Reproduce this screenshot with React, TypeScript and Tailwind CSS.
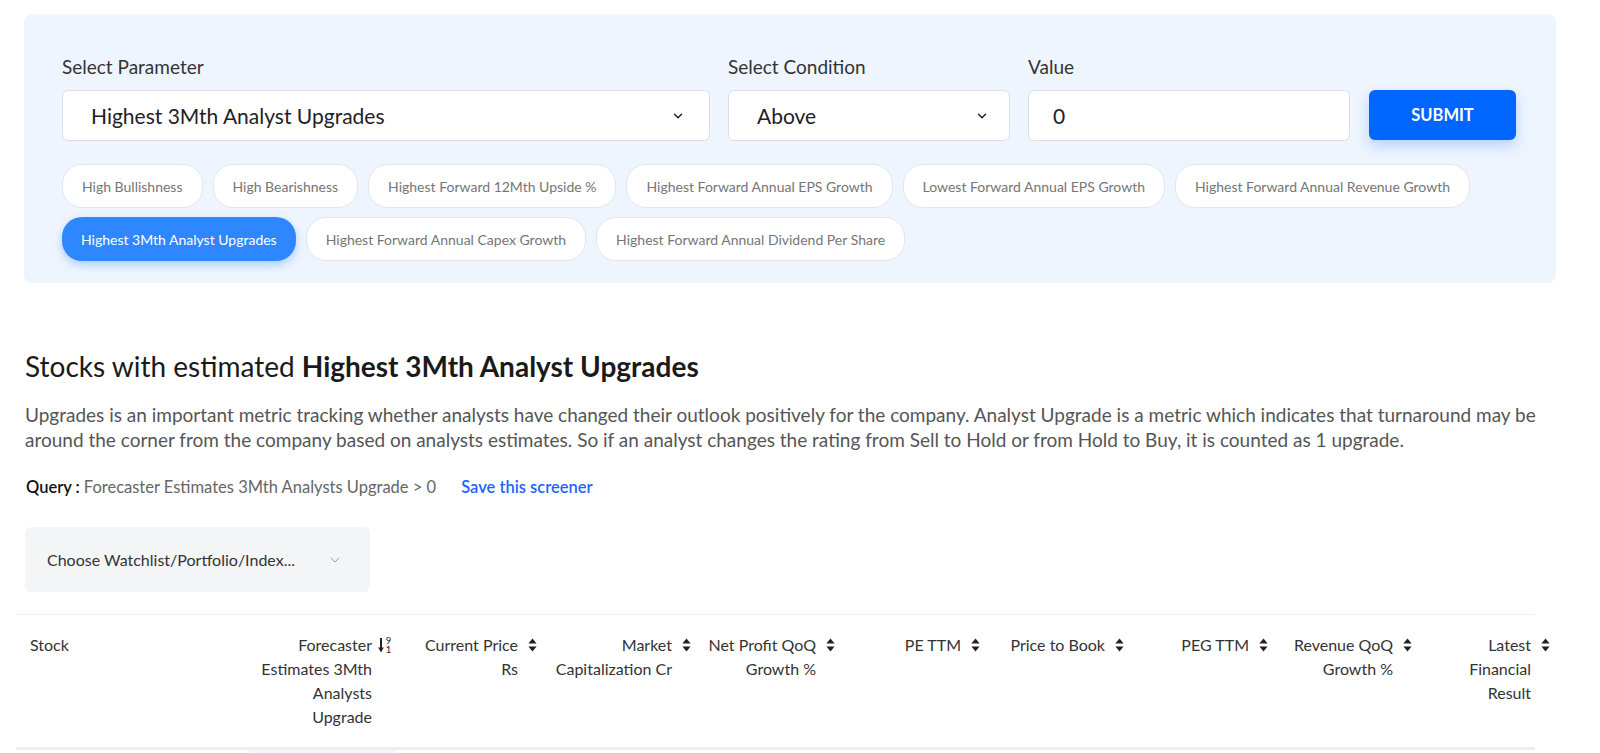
import { ChevronDown } from "lucide-react";

const CHIPS_ROW_1 = [
  "High Bullishness",
  "High Bearishness",
  "Highest Forward 12Mth Upside %",
  "Highest Forward Annual EPS Growth",
  "Lowest Forward Annual EPS Growth",
  "Highest Forward Annual Revenue Growth",
];

const CHIPS_ROW_2 = [
  "Highest 3Mth Analyst Upgrades",
  "Highest Forward Annual Capex Growth",
  "Highest Forward Annual Dividend Per Share",
];

const ACTIVE = "Highest 3Mth Analyst Upgrades";

const COLUMNS = [
  { label: "Current Price Rs", cell: "w-[145px]", text: "w-[100px]" },
  { label: "Market Capitalization Cr", cell: "w-[154px]", text: "w-[124px]" },
  { label: "Net Profit QoQ Growth %", cell: "w-[144px]", text: "w-[114px]" },
  { label: "PE TTM", cell: "w-[145px]", text: "w-[110px]" },
  { label: "Price to Book", cell: "w-[144px]", text: "w-[110px]" },
  { label: "PEG TTM", cell: "w-[144px]", text: "w-[110px]" },
  { label: "Revenue QoQ Growth %", cell: "w-[144px]", text: "w-[100px]" },
  { label: "Latest Financial Result", cell: "w-[138px]", text: "w-[70px]" },
];

function SortIcon() {
  return (
    <svg width="9" height="14" viewBox="0 0 9 14" className="mt-[5px] shrink-0 text-[#222]" fill="currentColor">
      <path d="M4.5 0.5 L8.6 5.6 H0.4 Z M0.4 8.4 H8.6 L4.5 13.5 Z" />
    </svg>
  );
}

function SortNumericIcon() {
  return (
    <svg width="14" height="18" viewBox="0 0 14 18" className="mt-[3px] shrink-0 text-[#222]">
      <path d="M3 2 V12.5" stroke="currentColor" strokeWidth="2" />
      <path d="M0.2 11.5 H5.8 L3 16.5 Z" fill="currentColor" />
      <text x="10.5" y="8" fontSize="9.5" textAnchor="middle" fill="currentColor" fontFamily="Lato, sans-serif">9</text>
      <text x="10.5" y="16.5" fontSize="9.5" textAnchor="middle" fill="currentColor" fontFamily="Lato, sans-serif">1</text>
    </svg>
  );
}

function Chip({ label }: { label: string }) {
  const active = label === ACTIVE;
  return (
    <button
      className={
        active
          ? "h-[44px] px-[19px] rounded-[20px] bg-[#2f87ff] text-white text-[14px] shadow-[0_4px_10px_rgba(47,135,255,0.35)]"
          : "h-[44px] px-[19px] rounded-[20px] bg-white border border-[#e3e6ec] text-[#767676] text-[14px]"
      }
    >
      {label}
    </button>
  );
}

export default function App() {
  return (
    <div className="min-h-screen bg-white font-['Lato','Open_Sans',sans-serif] text-[#222] overflow-hidden">
      <div className="w-[1532px] ml-[24px] pt-[14px]">
        {/* Filter panel */}
        <div className="rounded-lg bg-[#eff5fe] pl-[38px] pr-[38px] pt-[42px] pb-[22px]">
          <div className="flex items-end gap-[18px]">
            <div className="flex flex-col gap-[12px]">
              <label className="text-[19px] text-[#333] leading-[22px]">Select Parameter</label>
              <div className="w-[648px] h-[51px] bg-white border border-[#dcdfe6] rounded-md flex items-center justify-between pl-[28px] pr-[24px]">
                <span className="text-[21px] text-[#222]">Highest 3Mth Analyst Upgrades</span>
                <ChevronDown size={14} strokeWidth={2.5} className="text-[#222]" />
              </div>
            </div>
            <div className="flex flex-col gap-[12px]">
              <label className="text-[19px] text-[#333] leading-[22px]">Select Condition</label>
              <div className="w-[282px] h-[51px] bg-white border border-[#dcdfe6] rounded-md flex items-center justify-between pl-[28px] pr-[20px]">
                <span className="text-[21px] text-[#222]">Above</span>
                <ChevronDown size={14} strokeWidth={2.5} className="text-[#222]" />
              </div>
            </div>
            <div className="flex flex-col gap-[12px]">
              <label className="text-[19px] text-[#333] leading-[22px]">Value</label>
              <div className="w-[322px] h-[51px] bg-white border border-[#dcdfe6] rounded-md flex items-center pl-[24px]">
                <span className="text-[21px] text-[#222]">0</span>
              </div>
            </div>
            <button className="ml-[1px] mb-px w-[147px] h-[50px] rounded-md bg-[#0066ff] text-white font-bold text-[16.5px] shadow-[0_6px_14px_rgba(0,102,255,0.25)]">
              SUBMIT
            </button>
          </div>

          <div className="mt-[23px] flex flex-col gap-[9px]">
            <div className="flex gap-[10px]">
              {CHIPS_ROW_1.map((c) => (
                <Chip key={c} label={c} />
              ))}
            </div>
            <div className="flex gap-[10px]">
              {CHIPS_ROW_2.map((c) => (
                <Chip key={c} label={c} />
              ))}
            </div>
          </div>
        </div>

        {/* Description */}
        <h1 className="mt-[66px] ml-px text-[28px] leading-[34px] text-[#1a1a1a]">
          Stocks with estimated <span className="font-bold">Highest 3Mth Analyst Upgrades</span>
        </h1>
        <p className="mt-[20px] ml-px text-[19px] leading-[24.5px] text-[#555]">
          Upgrades is an important metric tracking whether analysts have changed their outlook positively for the company. Analyst Upgrade is a metric which indicates that turnaround may be around the corner from the company based on analysts estimates. So if an analyst changes the rating from Sell to Hold or from Hold to Buy, it is counted as 1 upgrade.
        </p>
        <div className="mt-[24px] ml-[2px] flex items-center text-[16.5px] leading-[22px]">
          <span className="font-semibold text-[#111]">Query :</span>
          <span className="ml-[4px] text-[#666]">Forecaster Estimates 3Mth Analysts Upgrade &gt; 0</span>
          <span className="ml-[25px] font-semibold text-[#1a66ff]">Save this screener</span>
        </div>

        {/* Watchlist picker */}
        <div className="mt-[29px] ml-px w-[345px] h-[65px] rounded-md bg-[#f4f5f7] flex items-center pl-[22px] pr-[27px] justify-between">
          <span className="text-[16px] text-[#333]">Choose Watchlist/Portfolio/Index...</span>
          <ChevronDown size={16} strokeWidth={1.5} className="text-[#9aa0aa]" />
        </div>

        {/* Table header */}
        <div className="mt-[22px] -ml-[8px] w-[1519px] border-t border-[#eceef1] border-b-[3px] border-b-[#eceef1]">
          <div className="flex pt-[18px] pb-[18px] text-[16px] leading-[24px] text-[#333] whitespace-nowrap">
            <div className="w-[231px] pl-[14px] shrink-0">Stock</div>
            <div className="w-[145px] shrink-0 flex justify-end gap-[6px]">
              <span className="w-[115px] text-right whitespace-normal">Forecaster Estimates 3Mth Analysts Upgrade</span>
              <SortNumericIcon />
            </div>
            {COLUMNS.map((c) => (
              <div key={c.label} className={`${c.cell} shrink-0 flex justify-end gap-[10px]`}>
                <span className={`${c.text} text-right whitespace-normal`}>{c.label}</span>
                <SortIcon />
              </div>
            ))}
          </div>
        </div>
        <div className="ml-[225px] w-[148px] h-[20px] bg-[#f3f7fe]" />
      </div>
    </div>
  );
}
